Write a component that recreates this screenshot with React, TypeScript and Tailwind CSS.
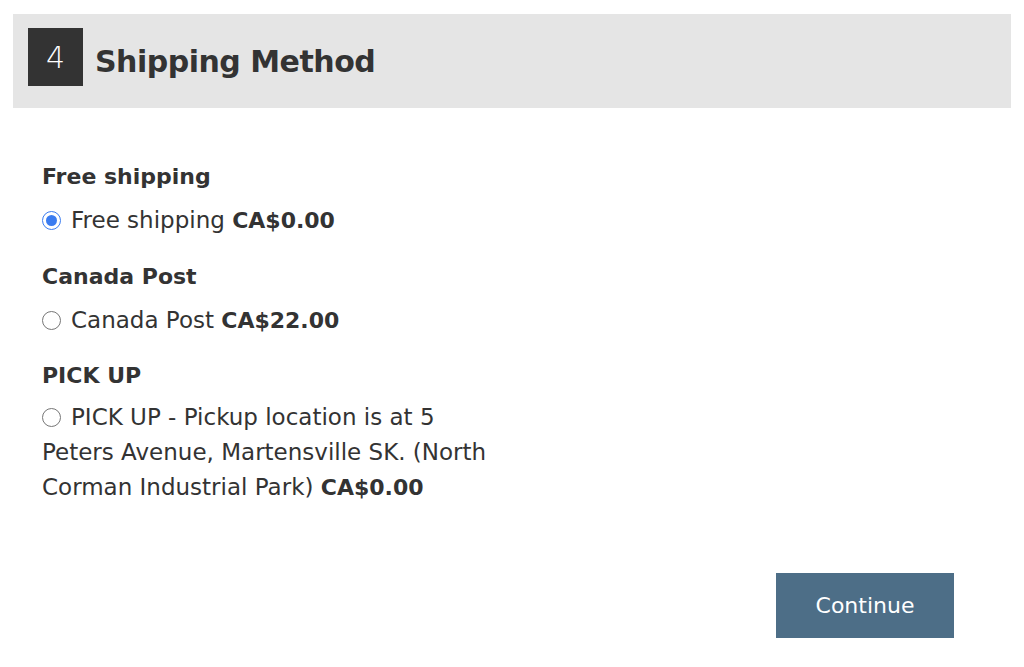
import React from "react";

function Radio({ checked }: { checked?: boolean }) {
  return checked ? (
    <span className="inline-flex h-[19px] w-[19px] shrink-0 items-center justify-center rounded-full border-[1.5px] border-[#3b7cf0] bg-white">
      <span className="h-[11px] w-[11px] rounded-full bg-[#3b7cf0]" />
    </span>
  ) : (
    <span className="inline-block h-[19px] w-[19px] shrink-0 rounded-full border-[1.5px] border-[#767676] bg-white" />
  );
}

export default function App() {
  return (
    <div
      className="min-h-[667px] w-[1024px] bg-white pt-[14px] text-[#333333]"
      style={{ fontFamily: '"DejaVu Sans", "Noto Sans", sans-serif' }}
    >
      <div className="mx-[13px] flex h-[94px] items-center bg-[#e5e5e5] pl-[15px]">
        <div className="mb-[8px] flex h-[58px] w-[55px] items-center justify-center bg-[#333333] text-[30px] font-extralight text-white">
          4
        </div>
        <h2 className="ml-[12px] text-[30px] font-bold tracking-[-0.5px] text-[#333333]">Shipping Method</h2>
      </div>

      <div className="pl-[42px] pt-[57px]">
        <div className="text-[22px] font-bold leading-[24px]">Free shipping</div>
        <div className="mt-[19px] flex items-center gap-[10px] text-[23px] leading-[24px]">
          <Radio checked />
          <span>
            Free shipping <b className="text-[22px] font-bold">CA$0.00</b>
          </span>
        </div>

        <div className="mt-[32px] text-[22px] font-bold leading-[24px]">Canada Post</div>
        <div className="mt-[19px] flex items-center gap-[10px] text-[23px] leading-[24px]">
          <Radio />
          <span>
            Canada Post <b className="text-[22px] font-bold">CA$22.00</b>
          </span>
        </div>

        <div className="mt-[31px] text-[22px] font-bold leading-[24px]">PICK UP</div>
        <div className="mt-[11px] whitespace-nowrap text-[23px] leading-[35px]">
          <span className="inline-flex items-center gap-[10px] align-middle">
            <Radio />
            <span>PICK UP - Pickup location is at 5</span>
          </span>
          <br />
          Peters Avenue, Martensville SK. (North
          <br />
          Corman Industrial Park) <b className="text-[22px] font-bold">CA$0.00</b>
        </div>
      </div>

      <div className="mt-[68px] flex justify-end pr-[70px]">
        <button className="flex h-[65px] w-[178px] items-center justify-center bg-[#4d6e87] text-[22px] text-white">
          Continue
        </button>
      </div>
    </div>
  );
}
